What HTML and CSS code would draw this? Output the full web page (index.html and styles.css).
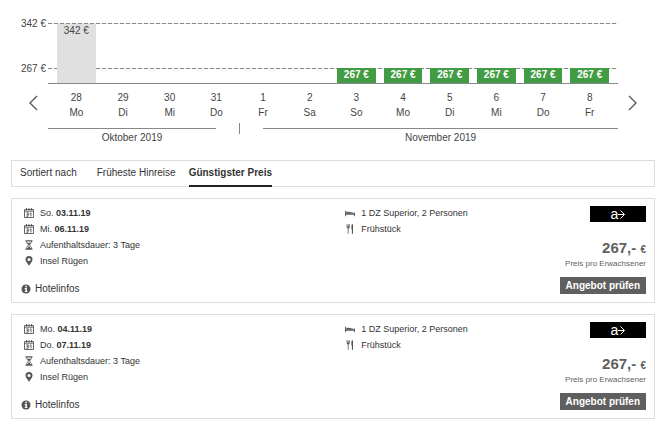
FILE: index.html
```html
<!DOCTYPE html>
<html lang="de">
<head>
    <meta charset="UTF-8">
    <meta name="viewport" content="width=device-width, initial-scale=1.0">
    <title>Termine und Preise</title>
    <link rel="stylesheet" href="styles.css">
</head>
<body>
    <svg class="sprite" aria-hidden="true">
        <symbol id="calendar" viewBox="0 0 10 10">
            <path d="M.5 1.500h9v8h-9zM.5 3.200h9M2.500 0v2.500M5 0v2.500M7.500 0v2.500" fill="none" stroke="currentColor" stroke-width=".9"/>
            <path d="M2.200 4.800h2v3.400h-2M2.600 6.500h1.600M5.600 5.600 7 4.800v3.600" fill="none" stroke="currentColor" stroke-width=".9"/>
        </symbol>
        <symbol id="hourglass" viewBox="0 0 10 10">
            <path d="M1.5.8h7M1.5 9.2h7" stroke="currentColor" stroke-width="1.2"/>
            <path d="M2.6 1v1.4L4.5 5 2.6 7.6V9M7.4 1v1.4L5.5 5l1.9 2.6V9" fill="none" stroke="currentColor" stroke-width=".8"/>
            <path d="M3 2.8h4L5 5.2zM5 6 7.2 9H2.8z" fill="currentColor"/>
        </symbol>
        <symbol id="pin" viewBox="0 0 10 10">
            <path fill-rule="evenodd" d="M5 0a3.500 3.500 0 0 0-3.500 3.500C1.500 5.800 4 7.500 5 10c1-2.500 3.500-4.200 3.500-6.500A3.500 3.500 0 0 0 5 0zm0 1.900a1.600 1.600 0 1 1 0 3.200 1.600 1.600 0 0 1 0-3.200z" fill="currentColor"/>
        </symbol>
        <symbol id="info" viewBox="0 0 10 10">
            <circle cx="5" cy="5" r="4.500" fill="currentColor"/>
            <path d="M4.300 1.800h1.600v1.400H4.300zM3.700 4h2.200v3.200h.6v.9H3.700v-.9h.6V4.900h-.6z" fill="#fff"/>
        </symbol>
        <symbol id="bed" viewBox="0 0 10 10">
            <path d="M0 2.800h.9v2.400h8.200V4.500h.9v3.700h-.9V6.700H.9v1.500H0z" fill="currentColor"/>
            <path d="M1.300 3.800h2.200l5 .9v.5H1.300z" fill="currentColor"/>
        </symbol>
        <symbol id="cutlery" viewBox="0 0 10 10">
            <path d="M2 .3v3M3.200.3v3M4.400.3v3M3.200 3.300v6.400" stroke="currentColor" stroke-width=".8" fill="none"/>
            <path d="M2 2.800h2.400v1.400H2zM6.400 5.400V1.600Q6.600.2 8 .2v9.500H6.900V5.400z" fill="currentColor"/>
        </symbol>
        <symbol id="arrow" viewBox="0 0 7 10">
            <path d="M0 5.500h6M2.500 1.500l4 4-4 4" fill="none" stroke="#fff" stroke-width="1"/>
        </symbol>
    </svg>

    <section class="chart">
        <div class="y-axis">
            <span>342 €</span>
            <span>267 €</span>
        </div>
        <div class="plot">
            <div class="gridline gridline-max"></div>
            <div class="gridline gridline-min"></div>
            <div class="slot"><div class="bar" style="height: 100%">342 €</div></div>
            <div class="slot"></div>
            <div class="slot"></div>
            <div class="slot"></div>
            <div class="slot"></div>
            <div class="slot"></div>
            <div class="slot"><div class="bar best" style="height: 25%">267 €</div></div>
            <div class="slot"><div class="bar best" style="height: 25%">267 €</div></div>
            <div class="slot"><div class="bar best" style="height: 25%">267 €</div></div>
            <div class="slot"><div class="bar best" style="height: 25%">267 €</div></div>
            <div class="slot"><div class="bar best" style="height: 25%">267 €</div></div>
            <div class="slot"><div class="bar best" style="height: 25%">267 €</div></div>
        </div>

        <button class="nav prev" type="button" aria-label="Zurück">
            <svg viewBox="0 0 9 16"><path d="M8 1 1 8l7 7"/></svg>
        </button>
        <div class="days">
            <div>28<br>Mo</div>
            <div>29<br>Di</div>
            <div>30<br>Mi</div>
            <div>31<br>Do</div>
            <div>1<br>Fr</div>
            <div>2<br>Sa</div>
            <div>3<br>So</div>
            <div>4<br>Mo</div>
            <div>5<br>Di</div>
            <div>6<br>Mi</div>
            <div>7<br>Do</div>
            <div>8<br>Fr</div>
        </div>
        <button class="nav next" type="button" aria-label="Weiter">
            <svg viewBox="0 0 9 16"><path d="m1 1 7 7-7 7"/></svg>
        </button>

        <div class="months">
            <div class="month october">Oktober 2019</div>
            <div class="divider"></div>
            <div class="month november">November 2019</div>
        </div>
    </section>

    <nav class="sort">
        <span class="sort-label">Sortiert nach</span>
        <button class="tab" type="button">Früheste Hinreise</button>
        <button class="tab active" type="button">Günstigster Preis</button>
    </nav>

    <article class="offer">
        <div class="trip">
            <p><svg class="icon"><use href="#calendar"/></svg><span>So. <b>03.11.19</b></span></p>
            <p><svg class="icon"><use href="#calendar"/></svg><span>Mi. <b>06.11.19</b></span></p>
            <p><svg class="icon"><use href="#hourglass"/></svg>Aufenthaltsdauer: 3 Tage</p>
            <p><svg class="icon"><use href="#pin"/></svg>Insel Rügen</p>
            <a class="hotel" href="#"><svg class="icon"><use href="#info"/></svg>Hotelinfos</a>
        </div>
        <div class="room">
            <p><svg class="icon"><use href="#bed"/></svg>1 DZ Superior, 2 Personen</p>
            <p><svg class="icon"><use href="#cutlery"/></svg>Frühstück</p>
        </div>
        <div class="booking">
            <div class="logo">a<svg><use href="#arrow"/></svg></div>
            <div class="price">267,- <small>€</small></div>
            <div class="per-person">Preis pro Erwachsener</div>
            <button class="check" type="button">Angebot prüfen</button>
        </div>
    </article>

    <article class="offer">
        <div class="trip">
            <p><svg class="icon"><use href="#calendar"/></svg><span>Mo. <b>04.11.19</b></span></p>
            <p><svg class="icon"><use href="#calendar"/></svg><span>Do. <b>07.11.19</b></span></p>
            <p><svg class="icon"><use href="#hourglass"/></svg>Aufenthaltsdauer: 3 Tage</p>
            <p><svg class="icon"><use href="#pin"/></svg>Insel Rügen</p>
            <a class="hotel" href="#"><svg class="icon"><use href="#info"/></svg>Hotelinfos</a>
        </div>
        <div class="room">
            <p><svg class="icon"><use href="#bed"/></svg>1 DZ Superior, 2 Personen</p>
            <p><svg class="icon"><use href="#cutlery"/></svg>Frühstück</p>
        </div>
        <div class="booking">
            <div class="logo">a<svg><use href="#arrow"/></svg></div>
            <div class="price">267,- <small>€</small></div>
            <div class="per-person">Preis pro Erwachsener</div>
            <button class="check" type="button">Angebot prüfen</button>
        </div>
    </article>
</body>
</html>
```

FILE: styles.css
```css
* {
    box-sizing: border-box;
}
body {
    font-family: "Liberation Sans", Arial, sans-serif;
    font-size: 10px;
    line-height: 15px;
    margin: 0;
    padding: 16px 12px 0 11px;
    background-color: #fff;
    color: #333;
}
p {
    margin: 0;
}
button {
    font: inherit;
    color: inherit;
    background: none;
    border: none;
    padding: 0;
    cursor: pointer;
}
.sprite {
    display: none;
}

/* price chart */
.chart {
    display: grid;
    grid-template-columns: 37px 1fr 37px;
    color: #444;
}
.y-axis {
    display: flex;
    flex-direction: column;
    gap: 30px;
    padding-right: 2px;
    text-align: right;
}
.plot {
    position: relative;
    display: flex;
    height: 61px;
    margin-top: 7px;
    padding: 1px 5px 0;
    border-bottom: 1px solid #888;
}
.gridline {
    position: absolute;
    left: 0;
    right: 0;
    height: 1px;
    background: repeating-linear-gradient(to right, #888 0 4px, #eee 4px 6px);
}
.gridline-max {
    top: 0;
}
.gridline-min {
    top: 45px;
}
.slot {
    position: relative;
    display: flex;
    flex: 1;
    align-items: flex-end;
    padding: 0 4px;
}
.bar {
    width: 100%;
    background-color: #e0e0e0;
    line-height: 13px;
    text-align: center;
}
.bar.best {
    background-color: #429c43;
    color: #fff;
    font-weight: bold;
}
.nav {
    height: 16px;
    margin-top: 11px;
}
.nav svg {
    display: block;
    width: 9px;
    height: 16px;
    fill: none;
    stroke: #555;
    stroke-width: 1.3;
}
.prev {
    grid-column: 1;
    padding-left: 18px;
}
.next {
    padding-left: 10px;
}
.days {
    display: flex;
    padding: 6px 5px 8px;
    text-align: center;
}
.days div {
    flex: 1;
}
.months {
    grid-column: 2;
    display: flex;
    gap: 23px;
    text-align: center;
}
.month {
    border-top: 1px solid #888;
    line-height: 18px;
}
.october {
    flex: 168;
}
.november {
    flex: 355;
}
.divider {
    width: 1px;
    height: 11px;
    margin-top: -5px;
    background-color: #888;
}

/* sorting */
.sort {
    display: flex;
    gap: 13px;
    height: 27px;
    margin-top: 13px;
    padding: 0 8px;
    border: 1px solid #ddd;
    line-height: 24px;
}
.sort-label {
    margin-right: 7px;
}
.tab {
    height: 26px;
    border-bottom: 2px solid transparent;
}
.tab.active {
    border-color: #222;
    font-weight: bold;
}

/* offers */
.offer {
    display: flex;
    margin-top: 11px;
    padding: 6px 8px 5px 12px;
    border: 1px solid #ddd;
    line-height: 16px;
}
.trip,
.room {
    font-size: 9px;
}
.trip {
    width: 51%;
}
.room {
    flex: 1;
}
.trip p,
.room p,
.hotel {
    display: flex;
    align-items: center;
    gap: 6px;
}
.icon {
    width: 10px;
    height: 10px;
    color: #555;
}
.room p {
    padding-left: 4px;
}
.hotel {
    margin: 12px 0 0 -3px;
    gap: 4px;
    color: inherit;
    font-size: 10px;
    text-decoration: none;
}
.booking {
    display: flex;
    flex-direction: column;
    align-items: flex-end;
    color: #5f5f5f;
}
.logo {
    display: flex;
    justify-content: center;
    align-items: center;
    width: 56px;
    height: 16px;
    margin-top: 1px;
    background-color: #000;
    color: #fff;
    font-size: 14px;
    line-height: 14px;
}
.logo svg {
    width: 7px;
    height: 10px;
}
.price {
    margin-top: 17px;
    font-size: 15px;
    font-weight: bold;
    line-height: 18px;
}
.price small {
    font-size: 10px;
}
.per-person {
    font-size: 8px;
    line-height: 10px;
}
.check {
    height: 17px;
    margin-top: 8px;
    padding: 0 6px;
    background-color: #5f5f5f;
    color: #fff;
    font-weight: bold;
}
```
